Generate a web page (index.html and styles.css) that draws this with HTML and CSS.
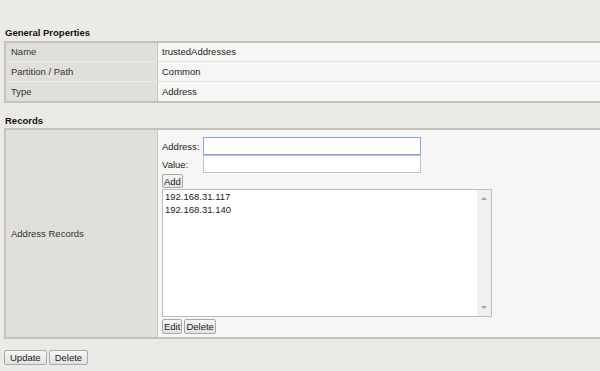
FILE: index.html
```html
<!DOCTYPE html>
<html lang="en">
<head>
  <meta charset="UTF-8">
  <meta name="viewport" content="width=device-width, initial-scale=1.0">
  <title>Data Group List - trustedAddresses</title>
  <link rel="stylesheet" href="styles.css">
</head>
<body>
  <div class="content">
    <!-- General Properties -->
    <h3 class="section-title first">General Properties</h3>
    <div class="panel">
      <div class="row">
        <div class="label">Name</div>
        <div class="value">trustedAddresses</div>
      </div>
      <div class="row">
        <div class="label">Partition / Path</div>
        <div class="value">Common</div>
      </div>
      <div class="row">
        <div class="label">Type</div>
        <div class="value">Address</div>
      </div>
    </div>

    <!-- Records -->
    <h3 class="section-title">Records</h3>
    <div class="panel">
      <div class="row records-row">
        <div class="label">Address Records</div>
        <div class="value records-editor">
          <div class="field">
            <label class="field-label" for="addr">Address:</label>
            <input class="text-input focused" id="addr" type="text">
          </div>
          <div class="field">
            <label class="field-label" for="val">Value:</label>
            <input class="text-input" id="val" type="text">
          </div>
          <div class="add-row">
            <button class="btn btn-small">Add</button>
          </div>
          <div class="list-box">
            <div class="list-items">
              <div class="list-item">192.168.31.117</div>
              <div class="list-item">192.168.31.140</div>
            </div>
            <div class="scroll-track">
              <span class="arrow up"></span>
              <span class="arrow down"></span>
            </div>
          </div>
          <div class="btn-row">
            <button class="btn btn-small">Edit</button>
            <button class="btn btn-small">Delete</button>
          </div>
        </div>
      </div>
    </div>

    <!-- Botones de formulario -->
    <div class="form-actions">
      <button class="btn">Update</button>
      <button class="btn">Delete</button>
    </div>
  </div>
</body>
</html>
```

FILE: styles.css
```css
/* ────────────────────────────────── */
/* RESET BÁSICO */
* {
  margin: 0;
  padding: 0;
  box-sizing: border-box;
}

body {
  font-family: "Liberation Sans", Arial, sans-serif;
  font-size: 9.5px;
  color: #222222;
  background-color: #ebeae6;
  overflow: hidden;
}

.content {
  padding-left: 4px;
}

/* ────────────────────────────────── */
/* TÍTULOS DE SECCIÓN */
.section-title {
  font-size: 9.5px;
  font-weight: bold;
  color: #111111;
  line-height: 14px;
  padding-left: 1px;
  margin-top: 11px;
}
.section-title.first {
  margin-top: 26px;
  margin-bottom: 1px;
}

/* ────────────────────────────────── */
/* PANELES DE PROPIEDADES */
.panel {
  border-top: 2px solid #c3c2be;
  border-bottom: 2px solid #c3c2be;
  border-left: 2px solid #c3c2be;
}

.row {
  display: flex;
  height: 20px;
  line-height: 19px;
}
.row:first-child {
  height: 18px;
  line-height: 18px;
}
.row + .row .label {
  border-top: 1px solid #ecebe8;
}
.row + .row .value {
  border-top: 1px solid #e5e4e1;
}

.label {
  width: 152px;
  padding-left: 5px;
  background-color: #e0dfdb;
  border-right: 1px solid #c9c8c4;
  color: #333333;
}

.value {
  flex: 1;
  padding-left: 4px;
  background-color: #f7f6f4;
}

/* ────────────────────────────────── */
/* EDITOR DE REGISTROS */
.records-row,
.records-row:first-child {
  height: 207px;
  line-height: normal;
}
.records-row .label {
  display: flex;
  align-items: center;
}

.records-editor {
  display: flex;
  flex-direction: column;
  padding: 7px 4px 3px 4px;
}

.field {
  display: flex;
  align-items: center;
  height: 18px;
}
.field-label {
  width: 41px;
}

.text-input {
  width: 218px;
  height: 18px;
  border: 1px solid #c2c2c2;
  background-color: #ffffff;
  outline: none;
}
.text-input.focused {
  border-color: #7ea6e6;
}

.add-row {
  margin-top: 1px;
  height: 14px;
  display: flex;
}

.list-box {
  margin-top: 1px;
  width: 330px;
  height: 128px;
  border: 1px solid #bcbcbc;
  background-color: #ffffff;
  display: flex;
}
.list-items {
  flex: 1;
  padding-left: 2px;
  line-height: 13px;
}
.scroll-track {
  width: 14px;
  background-color: #f0f0f0;
  position: relative;
}

/* Flechas del scroll */
.arrow {
  position: absolute;
  left: 4px;
  width: 0;
  height: 0;
  border-left: 3px solid transparent;
  border-right: 3px solid transparent;
}
.arrow.up {
  top: 7px;
  border-bottom: 3px solid #a3a3a3;
}
.arrow.down {
  bottom: 7px;
  border-top: 3px solid #a3a3a3;
}

.btn-row {
  margin-top: 2px;
  display: flex;
  gap: 2px;
}

/* ────────────────────────────────── */
/* BOTONES */
.btn {
  font-family: "Liberation Sans", Arial, sans-serif;
  font-size: 9.5px;
  color: #222222;
  height: 15px;
  padding: 0 5px;
  background: linear-gradient(#f6f6f6, #e2e2e2);
  border: 1px solid #a9a9a9;
  border-radius: 2px;
}
.btn-small {
  padding: 0 1px;
}
.add-row .btn-small {
  height: 14px;
}

.form-actions {
  margin-top: 11px;
  display: flex;
  gap: 2px;
}
```
